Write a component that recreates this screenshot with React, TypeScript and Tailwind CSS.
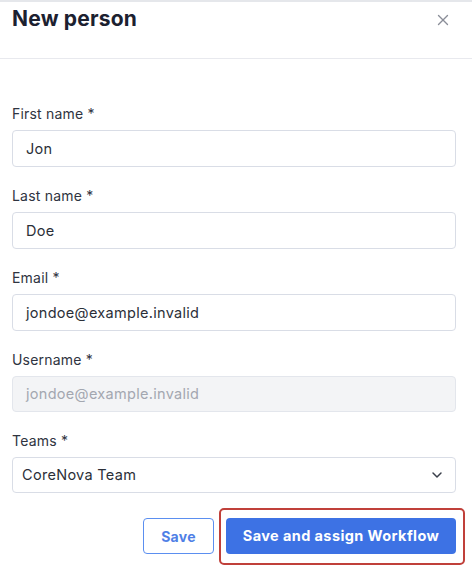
import { X, ChevronDown } from "lucide-react";

const font = { fontFamily: "Inter, 'Noto Sans', sans-serif" };

function Field({ label, value, disabled }: { label: string; value: string; disabled?: boolean }) {
  return (
    <div className="flex flex-col">
      <label className="mb-[6px] h-5 text-[14px] leading-5 tracking-[0.2px] text-[#2f3441]">{label} *</label>
      <div
        className={
          disabled
            ? "flex h-[36px] items-center rounded-[4px] border border-[#e3e6ec] bg-[#f3f4f6] px-[13px] text-[14.5px] tracking-[0.3px] text-[#a3a7b0]"
            : "flex h-[37px] items-center rounded-[4px] border border-[#d9dde6] bg-white px-[13px] text-[14.5px] tracking-[0.3px] text-[#2b2f38]"
        }
      >
        {value}
      </div>
    </div>
  );
}

export default function App() {
  return (
    <div className="h-[580px] w-[472px] overflow-hidden border-t-2 border-[#e5e7eb] bg-white" style={font}>
      <div className="flex h-[57px] items-start justify-between border-b border-[#e8e9ee] pl-3 pr-[20px] pt-[3px]">
        <h1 className="text-[21px] font-bold leading-7 tracking-[0.2px] text-[#1c2130]">New person</h1>
        <X className="mt-[6px] h-[18px] w-[18px] text-[#8a8e98]" strokeWidth={1.8} />
      </div>

      <div className="flex flex-col gap-[19px] pl-3 pr-4 pt-[45px]">
        <Field label="First name" value="Jon" />
        <Field label="Last name" value="Doe" />
        <Field label="Email" value="jondoe@example.invalid" />
        <Field label="Username" value="jondoe@example.invalid" disabled />
        <div className="flex flex-col">
          <label className="mb-[6px] h-5 text-[14px] leading-5 tracking-[0.2px] text-[#2f3441]">Teams *</label>
          <div className="flex h-[36px] items-center justify-between rounded-[4px] border border-[#d9dde6] bg-white pl-[9px] pr-[10px] text-[14.5px] tracking-[0.3px] text-[#2b2f38]">
            <span>CoreNova Team</span>
            <ChevronDown className="h-[16px] w-[16px] text-[#3a3f4a]" strokeWidth={2.2} />
          </div>
        </div>

        <div className="mt-[6px] flex justify-end gap-3">
          <button className="h-[36px] w-[71px] rounded-[4px] border border-[#5b8ff0] bg-white text-[14px] font-bold tracking-[0.3px] text-[#4f7fe6]">
            Save
          </button>
          <div className="relative">
            <span className="pointer-events-none absolute -bottom-[11px] -left-[7px] -right-[9px] -top-[10px] rounded-[5px] border-2 border-[#c0403a]" />
            <button className="h-[36px] w-[230px] rounded-[4px] bg-[#3d72e4] text-[14.5px] font-bold tracking-[0.4px] text-white">
              Save and assign Workflow
            </button>
          </div>
        </div>
      </div>
    </div>
  );
}
